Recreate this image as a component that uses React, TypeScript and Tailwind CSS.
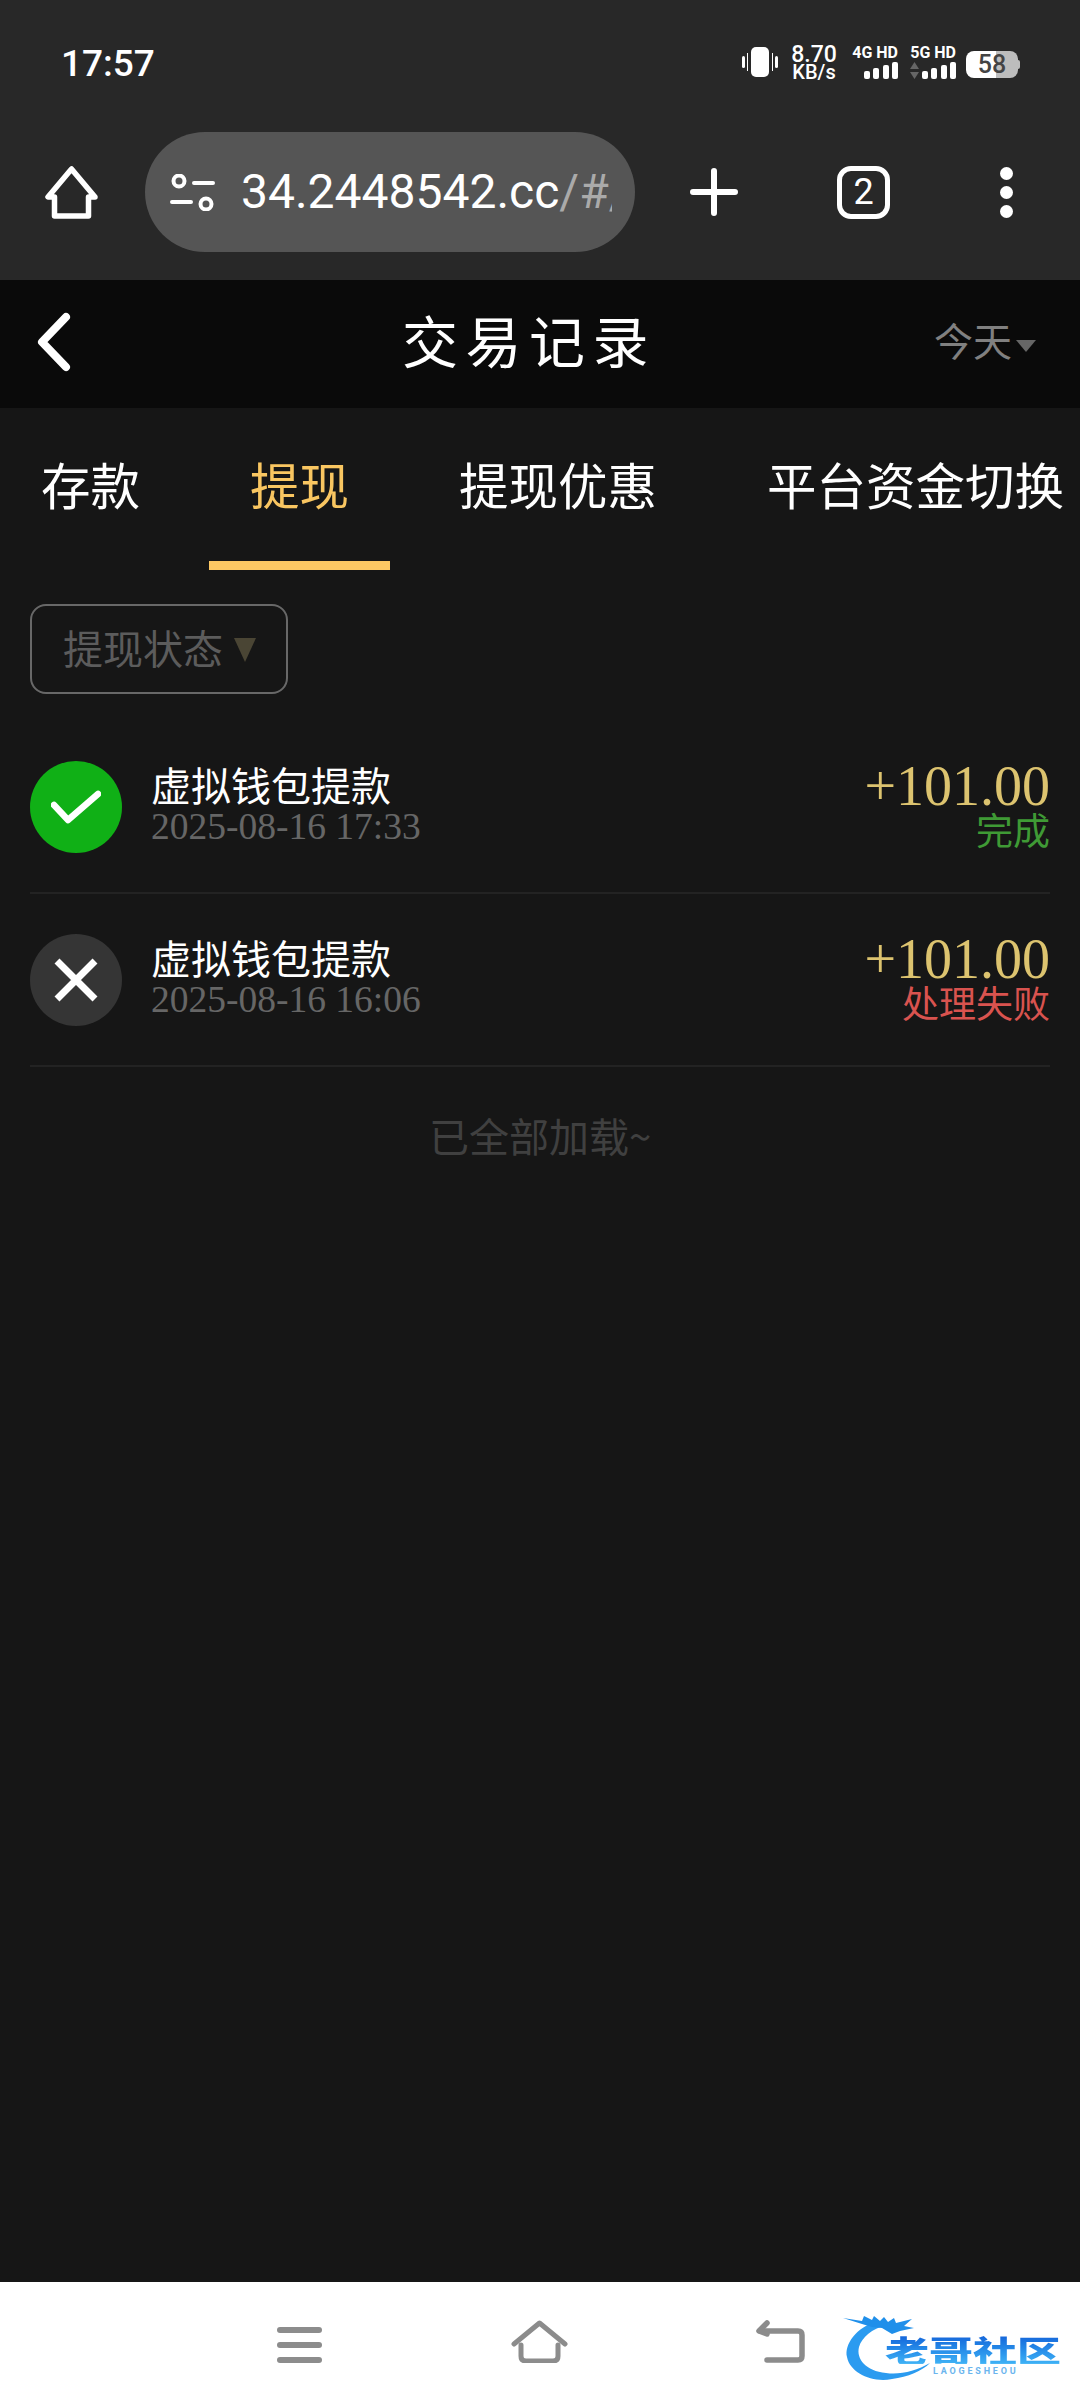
const cjk = "font-['Noto_Sans_CJK_SC','Noto_Sans',sans-serif]";

function Signal() {
  return (
    <svg width="34" height="17" viewBox="0 0 34 17" fill="#fff">
      <rect x="0" y="9" width="6" height="8" rx="2" />
      <rect x="9" y="6" width="6" height="11" rx="2" />
      <rect x="19" y="3" width="6" height="14" rx="2" />
      <rect x="28" y="0" width="6" height="17" rx="2" />
    </svg>
  );
}

function StatusBar() {
  return (
    <div className="h-[124px] flex items-center pl-[61px] pr-[60px] text-white font-['Roboto',sans-serif]">
      <span className="mt-[2px] text-[37px] font-medium leading-none">17:57</span>
      <div className="ml-auto flex items-center">
        <svg width="36" height="30" viewBox="0 0 36 30" fill="#fff">
          <rect x="9" y="0" width="18" height="30" rx="5" />
          <rect x="0" y="9" width="3" height="12" rx="1.5" />
          <rect x="33" y="9" width="3" height="12" rx="1.5" />
          <rect x="5" y="6" width="1" height="18" />
          <rect x="30" y="6" width="1" height="18" />
        </svg>
        <div className="ml-[13px] mt-[2px] w-[46px] flex flex-col items-center">
          <span className="text-[23px] font-medium leading-[19px]">8.70</span>
          <span className="text-[20px] font-medium leading-[17px]">KB/s</span>
        </div>
        <div className="ml-[11px] w-[50px] flex flex-col items-end gap-[3px]">
          <span className="text-[16px] font-bold leading-[13px] whitespace-nowrap">4G HD</span>
          <Signal />
        </div>
        <div className="ml-[8px] w-[50px] flex flex-col items-end gap-[3px]">
          <span className="text-[16px] font-bold leading-[13px] whitespace-nowrap">5G HD</span>
          <div className="flex items-center gap-[3px]">
            <svg width="9" height="17" viewBox="0 0 9 17" fill="#666">
              <path d="M4.5 0 9 7H0zM0 10h9l-4.500 7z" />
            </svg>
            <Signal />
          </div>
        </div>
        <div className="ml-[10px] mt-[5px] flex items-center">
          <div className="w-[52px] h-[27px] rounded-[8px] bg-[linear-gradient(90deg,#ffffff_58%,#bdbdbd_58%)] flex items-center justify-center text-[#444] text-[25px] font-medium leading-none">
            58
          </div>
          <div className="w-[2px] h-[9px] bg-[#bdbdbd] rounded-r-[2px]" />
        </div>
      </div>
    </div>
  );
}

function Toolbar() {
  return (
    <div className="h-[136px] flex items-center pl-[45px] font-['Roboto',sans-serif]">
      <svg width="53" height="53" viewBox="0 0 53 53" fill="none" stroke="#fff" strokeWidth="5.500" strokeLinejoin="round" strokeLinecap="round">
        <path d="M26.500 3 3 31h6.500v19h34V31H50z" />
      </svg>
      <div className="ml-[47px] w-[490px] h-[120px] rounded-full bg-[#555555] flex items-center pl-[25px]">
        <svg width="45" height="37" viewBox="0 0 45 37" fill="none" stroke="#fff" strokeWidth="4" strokeLinecap="round">
          <circle cx="9" cy="7" r="5.500" />
          <path d="M24 9h19M2 28h19" />
          <circle cx="36" cy="30" r="5.500" />
        </svg>
        <div className="ml-[26px] w-[371px] overflow-hidden whitespace-nowrap text-[48px] leading-none text-white">
          34.2448542.cc<span className="text-[#aaaaaa]">/#/</span>
        </div>
      </div>
      <svg className="ml-[55px]" width="48" height="48" viewBox="0 0 48 48" stroke="#fff" strokeWidth="6" strokeLinecap="round">
        <path d="M24 3v42M3 24h42" />
      </svg>
      <div className="ml-[99px] w-[53px] h-[53px] rounded-[14px] border-[5px] border-white flex items-center justify-center text-white text-[36px] leading-none">
        2
      </div>
      <div className="ml-[110px] flex flex-col gap-[6px]">
        <div className="w-[13px] h-[13px] rounded-full bg-white" />
        <div className="w-[13px] h-[13px] rounded-full bg-white" />
        <div className="w-[13px] h-[13px] rounded-full bg-white" />
      </div>
    </div>
  );
}

function Header() {
  return (
    <div className={`h-[128px] bg-[#0a0a0a] flex items-center pl-[36px] pr-[44px] text-white ${cjk}`}>
      <svg className="mb-[4px]" width="35" height="60" viewBox="0 0 35 60" fill="none" stroke="#fff" strokeWidth="8" strokeLinecap="round" strokeLinejoin="round">
        <path d="M30 5 6 30l24 25" />
      </svg>
      <span className="ml-[331px] mb-[10px] text-[56px] leading-none tracking-[7.500px] whitespace-nowrap">交易记录</span>
      <div className="ml-auto flex items-center text-[#808080]">
        <span className="mb-[10px] text-[39px] leading-none">今天</span>
        <svg className="ml-[4px] mt-[4px]" width="20" height="12" viewBox="0 0 20 12" fill="#666">
          <path d="M0 0h20L10 12z" />
        </svg>
      </div>
    </div>
  );
}

function Tabs() {
  return (
    <div className={`h-[162px] pl-[41px] flex items-start gap-[110px] text-[49.500px] leading-none text-white whitespace-nowrap overflow-hidden ${cjk}`}>
      <div className="pt-[51px]">存款</div>
      <div className="pt-[51px] flex flex-col items-center text-[#f9c661]">
        提现
        <div className="mt-[52px] w-[181px] h-[9px] -mx-[41px] bg-[#fdc863] shrink-0" />
      </div>
      <div className="pt-[51px]">提现优惠</div>
      <div className="pt-[51px]">平台资金切换</div>
    </div>
  );
}

function Row({ time, ok, status }: { time: string; ok: boolean; status: string }) {
  return (
    <div className="h-[173px] flex items-center border-b-2 border-[#232323]">
      <div className={`w-[92px] h-[92px] rounded-full flex items-center justify-center ${ok ? "bg-[#10b016]" : "bg-[#353535]"}`}>
        {ok ? (
          <svg width="50" height="34" viewBox="0 0 50 34" fill="none" stroke="#fff" strokeWidth="6.500" strokeLinecap="round" strokeLinejoin="round">
            <path d="M3 15 17 30 47 4" />
          </svg>
        ) : (
          <svg width="44" height="44" viewBox="0 0 44 44" fill="none" stroke="#fff" strokeWidth="7">
            <path d="M3 3 41 41M41 3 3 41" />
          </svg>
        )}
      </div>
      <div className="ml-[29px] mb-[7px] flex flex-col">
        <span className={`text-[40px] leading-[48px] text-white ${cjk}`}>虚拟钱包提款</span>
        <span className="text-[37.500px] leading-[38px] text-[#666666] font-['Liberation_Serif',serif]">{time}</span>
      </div>
      <div className="ml-auto mb-[3px] flex flex-col items-end">
        <span className="text-[56px] leading-[48px] text-[#dcc36f] font-['Liberation_Serif',serif]">+101.00</span>
        <span className={`text-[37px] leading-[38px] ${ok ? "text-[#3f9a35]" : "text-[#d9534f]"} ${cjk}`}>{status}</span>
      </div>
    </div>
  );
}

function Logo() {
  return (
    <div className="absolute left-[842px] top-[31px] w-[222px] h-[70px]">
      <svg className="absolute left-0 top-0" width="110" height="70" viewBox="0 0 110 70">
        <path d="M36 8C14 14 2 32 5 44c3 16 25 26 45 22 16-2 30-8 38-16-14 8-30 12-44 10C24 58 14 46 17 34c3-10 13-18 27-22z" fill="#2b9bf0" />
        <path d="M1 5 20 8 22 3 30 7 32 3 38 8 42 4 46 9 52 5 54 10 70 6 62 13 72 15 58 18 50 21 40 15 30 14 20 11z" fill="#1f8fea" />
      </svg>
      <span className={`absolute left-[43px] top-[21px] w-[179px] origin-top scale-y-[0.68] text-[44px] leading-[44px] font-black whitespace-nowrap bg-linear-to-b from-[#1560d8] to-[#3fb2f6] bg-clip-text text-transparent ${cjk}`}>老哥社区</span>
      <span className="absolute left-[91px] top-[53px] text-[9px] leading-[10px] font-bold tracking-[2.800px] text-[#6bb5ee] whitespace-nowrap font-['Roboto',sans-serif]">LAOGESHEOU</span>
    </div>
  );
}

function BottomNav() {
  return (
    <div className="relative h-[126px] bg-white flex items-start pl-[277px] pt-[38px]">
      <svg width="45" height="43" viewBox="0 0 45 43" fill="#8c8c8c">
        <rect x="0" y="7" width="45" height="6" rx="3" />
        <rect x="0" y="22" width="45" height="6" rx="3" />
        <rect x="0" y="37" width="45" height="6" rx="3" />
      </svg>
      <svg className="ml-[189px]" width="57" height="43" viewBox="0 0 57 43" fill="none" stroke="#8c8c8c" strokeWidth="5" strokeLinecap="round" strokeLinejoin="round">
        <path d="M3 24 28.500 3 54 24" />
        <path d="M10 25v11q0 5 5 5h27q5 0 5-5V25" />
      </svg>
      <svg className="ml-[188px]" width="49" height="43" viewBox="0 0 49 43" fill="none" stroke="#8c8c8c" strokeWidth="5.500" strokeLinecap="round" strokeLinejoin="round">
        <path d="M11 3 3 11l8 3" />
        <path d="M4 11h38q4 0 4 4v21q0 4-4 4H11" />
      </svg>
      <Logo />
    </div>
  );
}

export default function App() {
  return (
    <div className="w-[1080px] h-[2408px] flex flex-col bg-[#161616] overflow-hidden">
      <div className="h-[280px] bg-[#282828]">
        <StatusBar />
        <Toolbar />
      </div>
      <Header />
      <Tabs />
      <div className="flex-1 px-[30px]">
        <div className={`mt-[34px] w-[258px] h-[90px] rounded-[16px] border-2 border-[#686868] flex items-center pl-[31px] ${cjk}`}>
          <span className="mb-[5px] text-[40px] leading-none text-[#5c5c5c] whitespace-nowrap">提现状态</span>
          <svg className="ml-[11px] mt-[2px]" width="22" height="24" viewBox="0 0 22 24" fill="#4a4534">
            <path d="M0 0h22L11 24z" />
          </svg>
        </div>
        <div className="mt-[27px]">
          <Row time="2025-08-16 17:33" ok status="完成" />
          <Row time="2025-08-16 16:06" ok={false} status="处理失败" />
        </div>
        <p className={`mt-[46px] text-center text-[40px] leading-[44px] text-[#404040] ${cjk}`}>已全部加载~</p>
      </div>
      <BottomNav />
    </div>
  );
}
